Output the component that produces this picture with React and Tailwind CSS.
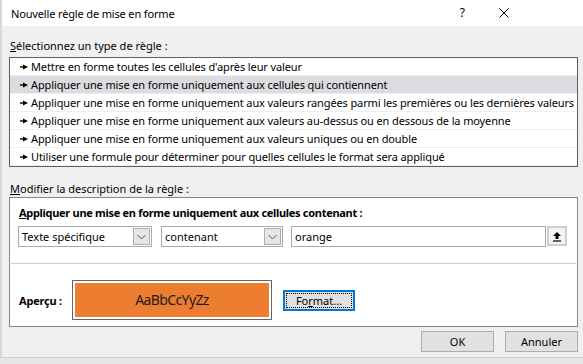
import React from "react";

const font = { fontFamily: '"Noto Sans", "Open Sans", sans-serif' };

function Arrow() {
  return (
    <svg width="8" height="6" viewBox="0 0 8 6" className="shrink-0">
      <path d="M0 3h4" stroke="#000" strokeWidth="1.4" />
      <polygon points="3,0.5 8,3 3,5.5" fill="#000" />
    </svg>
  );
}

function Chevron() {
  return (
    <svg width="9" height="6" viewBox="0 0 9 6">
      <path d="M0.5 1L4.5 5L8.5 1" stroke="#555" strokeWidth="1" fill="none" />
    </svg>
  );
}

const rows = [
  "Mettre en forme toutes les cellules d'après leur valeur",
  "Appliquer une mise en forme uniquement aux cellules qui contiennent",
  "Appliquer une mise en forme uniquement aux valeurs rangées parmi les premières ou les dernières valeurs",
  "Appliquer une mise en forme uniquement aux valeurs au-dessus ou en dessous de la moyenne",
  "Appliquer une mise en forme uniquement aux valeurs uniques ou en double",
  "Utiliser une formule pour déterminer pour quelles cellules le format sera appliqué",
];

function Combo({ w, text }) {
  return (
    <div className={`h-[21px] ${w} border border-[#a9a9a9] bg-white flex items-center justify-between pl-[3px] pr-[1px]`}>
      <span className="text-[11px] leading-none text-black">{text}</span>
      <div className="w-[17px] h-[17px] bg-[#e6e6e6] border border-[#adadad] flex items-center justify-center">
        <Chevron />
      </div>
    </div>
  );
}

export default function App() {
  return (
    <div className="w-[583px] h-[364px] bg-[#e6e6e6] overflow-hidden flex flex-col" style={font}>
      <div className="h-[358px] w-[583px] flex flex-col bg-[#f0f0f0] border-l-2 border-[#d8d8d8] border-b border-b-[#cfcfcf]">
        {/* Title bar */}
        <div className="h-[26px] bg-white flex items-center shrink-0">
          <span className="ml-[9px] text-[11px] tracking-[-0.15px] text-black leading-none">Nouvelle règle de mise en forme</span>
          <span className="ml-auto mr-[34px] text-[12px] text-black leading-none">?</span>
          <svg width="10" height="10" viewBox="0 0 10 10" className="mr-[74px]">
            <path d="M0.5 0.5L9.5 9.5M9.5 0.5L0.5 9.5" stroke="#000" strokeWidth="1" />
          </svg>
        </div>

        <div className="flex flex-col pl-[7px] pr-[5px]">
          <div className="mt-[11px] h-[16px] flex items-center text-[11px] text-black leading-none ml-[1px]">
            <span><span className="underline">S</span>électionnez un type de règle :</span>
          </div>

          <div className="mt-[4px] h-[110px] border border-[#5f5f5f] bg-white flex flex-col">
            {rows.map((r, i) => (
              <div
                key={i}
                className={`h-[18px] flex items-center gap-[3px] pl-[10px] border-b border-[#efefef] ${i === 1 ? "bg-[#dcdce0]" : ""}`}
              >
                <Arrow />
                <span className="text-[11px] tracking-[-0.12px] leading-none text-black whitespace-nowrap">{r}</span>
              </div>
            ))}
          </div>

          <div className="mt-[13px] h-[16px] flex items-center text-[11px] text-black leading-none ml-[1px]">
            <span><span className="underline">M</span>odifier la description de la règle :</span>
          </div>

          <div className="mt-[1px] h-[130px] border border-[#828790] bg-white flex flex-col">
            <div className="mt-[6px] h-[16px] flex items-center pl-[9px] text-[11px] font-bold tracking-[-0.3px] text-black leading-none">
              <span><span className="underline">A</span>ppliquer une mise en forme uniquement aux cellules contenant :</span>
            </div>
            <div className="mt-[6px] flex items-center pl-[8px]">
              <Combo w="w-[134px]" text="Texte spécifique" />
              <div className="w-[9px]" />
              <Combo w="w-[122px]" text="contenant" />
              <div className="w-[8px]" />
              <div className="h-[21px] w-[255px] border border-[#a9a9a9] bg-white flex items-center pl-[3px]">
                <span className="text-[11px] leading-none text-black">orange</span>
              </div>
              <div className="ml-[1px] h-[20px] w-[20px] border-2 border-[#cfcfcf] bg-[#f3f3f3] flex items-center justify-center self-start">
                <svg width="10" height="11" viewBox="0 0 10 11">
                  <path d="M5 1L1 5H3.5V8H6.5V5H9Z" fill="#000" />
                  <path d="M1 10H9" stroke="#000" strokeWidth="1.2" />
                </svg>
              </div>
            </div>
            <div className="mt-[16px] mx-[1px] h-px bg-[#cdcdcd]" />
            <div className="mt-[16px] flex items-center pl-[9px]">
              <span className="w-[53px] text-[11px] font-bold tracking-[-0.2px] text-black leading-none">Aperçu :</span>
              <div className="w-[200px] h-[40px] border border-[#646464] bg-white p-[2px]">
                <div className="w-full h-full bg-[#ed7d31] flex items-center justify-center">
                  <span className="text-[14px] tracking-[-0.6px] text-[#1e1e1e] leading-none">AaBbCcYyZz</span>
                </div>
              </div>
              <div className="ml-[11px] w-[72px] h-[21px] border-2 border-[#0078d7] bg-[#e1e1e1] p-[1px]">
                <div className="w-full h-full border border-dotted border-black flex items-center justify-center">
                  <span className="text-[11px] text-black leading-none">Fo<span className="underline">r</span>mat...</span>
                </div>
              </div>
            </div>
          </div>

          <div className="mt-[4px] flex justify-end gap-[11px]">
            <div className="w-[73px] h-[21px] border border-[#adadad] bg-[#e1e1e1] flex items-center justify-center text-[11px] text-black leading-none">OK</div>
            <div className="w-[73px] h-[21px] border border-[#adadad] bg-[#e1e1e1] flex items-center justify-center text-[11px] text-black leading-none">Annuler</div>
          </div>
        </div>
      </div>
    </div>
  );
}
